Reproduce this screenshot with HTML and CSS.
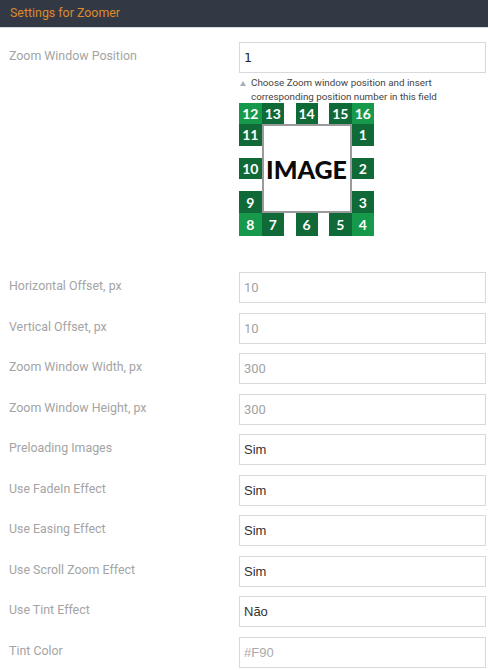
FILE: index.html
```html
<!DOCTYPE html>
<html>
<head>
<meta charset="utf-8">
<link rel="stylesheet" href="styles.css">
</head>
<body>
<div class="header">Settings for Zoomer</div>
<div class="form">
  <div class="row">
    <div class="label">Zoom Window Position</div>
    <div class="control">
      <div class="field serif">1</div>
      <div class="hint">
        <span class="tri"></span>
        <span class="hint-text">Choose Zoom window position and insert<br>corresponding position number in this field</span>
      </div>
      <div class="posgrid">
        <div class="cell light" style="grid-area:1/1">12</div>
        <div class="cell" style="grid-area:1/2">13</div>
        <div class="cell" style="grid-area:1/4">14</div>
        <div class="cell" style="grid-area:1/6">15</div>
        <div class="cell light" style="grid-area:1/7">16</div>
        <div class="cell" style="grid-area:2/1">11</div>
        <div class="cell" style="grid-area:2/7">1</div>
        <div class="cell" style="grid-area:4/1">10</div>
        <div class="cell" style="grid-area:4/7">2</div>
        <div class="cell" style="grid-area:6/1">9</div>
        <div class="cell" style="grid-area:6/7">3</div>
        <div class="cell light" style="grid-area:7/1">8</div>
        <div class="cell" style="grid-area:7/2">7</div>
        <div class="cell" style="grid-area:7/4">6</div>
        <div class="cell" style="grid-area:7/6">5</div>
        <div class="cell light" style="grid-area:7/7">4</div>
        <div class="image">IMAGE</div>
      </div>
    </div>
  </div>
  <div class="row">
    <div class="label">Horizontal Offset, px</div>
    <div class="control"><div class="field muted">10</div></div>
  </div>
  <div class="row">
    <div class="label">Vertical Offset, px</div>
    <div class="control"><div class="field muted">10</div></div>
  </div>
  <div class="row">
    <div class="label">Zoom Window Width, px</div>
    <div class="control"><div class="field muted">300</div></div>
  </div>
  <div class="row">
    <div class="label">Zoom Window Height, px</div>
    <div class="control"><div class="field muted">300</div></div>
  </div>
  <div class="row">
    <div class="label">Preloading Images</div>
    <div class="control"><div class="field select">Sim</div></div>
  </div>
  <div class="row">
    <div class="label">Use FadeIn Effect</div>
    <div class="control"><div class="field select">Sim</div></div>
  </div>
  <div class="row">
    <div class="label">Use Easing Effect</div>
    <div class="control"><div class="field select">Sim</div></div>
  </div>
  <div class="row">
    <div class="label">Use Scroll Zoom Effect</div>
    <div class="control"><div class="field select">Sim</div></div>
  </div>
  <div class="row">
    <div class="label">Use Tint Effect</div>
    <div class="control"><div class="field select">Não</div></div>
  </div>
  <div class="row">
    <div class="label">Tint Color</div>
    <div class="control"><div class="field color">#F90</div></div>
  </div>
</div>
</body>
</html>
```
FILE: styles.css
```css
* { box-sizing: border-box; }
html, body { margin: 0; padding: 0; background: #fff; }
body { font-family: Roboto, "Liberation Sans", sans-serif; width: 488px; overflow: hidden; }
.header {
  height: 28px;
  background: #323945;
  border-bottom: 1px solid #d5d8dc;
  color: #de8a2c;
  font-size: 12.4px;
  line-height: 26px;
  padding-left: 10px;
}
.form {
  padding: 14px 2px 0 9px;
  display: flex;
  flex-direction: column;
  gap: 9.5px;
}
.row {
  display: grid;
  grid-template-columns: 230px 247px;
}
.label {
  color: #a4a4a4;
  font-size: 12.4px;
  line-height: 28px;
}
.field {
  height: 31px;
  border: 1px solid #d9d9dc;
  padding-left: 4px;
  font-size: 13px;
  line-height: 29px;
  color: #333;
  font-family: "Liberation Sans", Arial, sans-serif;
}
.field.serif { font-family: "DejaVu Sans", sans-serif; font-size: 12.5px; color: #222; }
.field.muted { font-family: Roboto, sans-serif; color: #a3a3a3; }
.field.color { color: #aaa; }
.hint {
  display: flex;
  margin-top: 3px;
  height: 27px;
}
.tri {
  width: 0; height: 0;
  border-left: 3.5px solid transparent;
  border-right: 3.5px solid transparent;
  border-bottom: 5px solid #a8aeb4;
  margin: 5px 5px 0 1px;
}
.hint-text {
  font-size: 9.8px;
  line-height: 13.5px;
  color: #444;
}
.posgrid {
  display: grid;
  grid-template-columns: 22.5px 22.5px 11.5px 22px 11.5px 22.5px 22.5px;
  grid-template-rows: 21px 21.5px 12px 21.5px 12px 22px 22.5px;
  width: 135px;
  margin-bottom: 27px;
}
.cell {
  background: #0f6a38;
  color: #fff;
  font-family: Lato, "Open Sans", sans-serif;
  font-weight: 700;
  font-size: 14px;
  display: flex;
  align-items: center;
  justify-content: center;
}
.cell.light { background: #17994b; }
.image {
  grid-area: 2 / 2 / 7 / 7;
  border: 2px solid #9a9a9a;
  background: #fff;
  display: flex;
  align-items: center;
  justify-content: center;
  font-family: Lato, "Open Sans", sans-serif;
  font-weight: 900;
  font-size: 25px;
  color: #0a0a0a;
}
```
